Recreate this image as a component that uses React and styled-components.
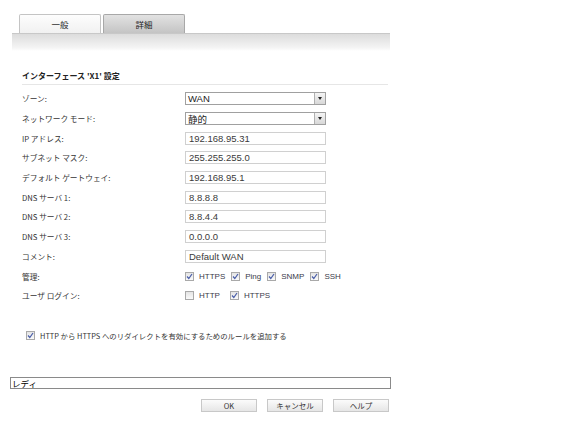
import React from "react";
import styled, { createGlobalStyle } from "styled-components";

const Global = createGlobalStyle`
  html, body { margin: 0; padding: 0; background: #fff; }
  body { font-family: "Liberation Sans", "Noto Sans CJK JP", sans-serif; color: #333; }
`;

const Page = styled.div`
  width: 576px;
  height: 439px;
  padding-top: 14px;
  box-sizing: border-box;
`;

const TabBar = styled.div`
  display: flex;
  gap: 2px;
  padding-left: 19px;
  height: 19px;
`;

const Tab = styled.div`
  width: 82px;
  height: 19px;
  box-sizing: border-box;
  border: 1px solid ${(p) => (p.$active ? "#c4c4c4" : "#a8a8a8")};
  border-bottom: none;
  border-radius: 2px 2px 0 0;
  background: ${(p) =>
    p.$active
      ? "linear-gradient(#fdfdfd, #f1f1f1)"
      : "linear-gradient(#e2e2e2, #c4c4c4)"};
  display: flex;
  align-items: center;
  justify-content: center;
  font-family: "Noto Sans CJK JP", sans-serif;
  font-size: 8.5px;
  color: #222;
`;

const Band = styled.div`
  margin-left: 12px;
  width: 378px;
  height: 17px;
  border-top: 1px solid #c8c8c8;
  background: linear-gradient(#dcdcdc, #f4f4f4 80%, #ffffff);
`;

const Section = styled.div`
  padding: 18px 0 0 22px;
  width: 366px;
`;

const Title = styled.div`
  font-family: "Noto Sans CJK JP", sans-serif;
  font-size: 8px;
  font-weight: bold;
  color: #222;
  height: 15px;
  line-height: 14px;
  border-bottom: 1px solid #e6e6e6;
`;

const Form = styled.div`
  display: grid;
  grid-template-columns: 163px 141px;
  grid-auto-rows: 19.7px;
  align-items: center;
  margin-top: 4px;
`;

const Label = styled.div`
  font-family: "Noto Sans CJK JP", sans-serif;
  font-size: 7.7px;
  color: #333;
  white-space: nowrap;
`;

const SelectBox = styled.div`
  height: 13px;
  box-sizing: border-box;
  border: 1px solid #a0a0a0;
  background: #fff;
  display: flex;
  align-items: center;
  justify-content: space-between;
  font-family: "Liberation Sans", "Noto Sans CJK JP", sans-serif;
  font-size: 9.5px;
  color: #222;
  padding-left: 2px;
`;

const Arrow = styled.div`
  width: 11px;
  height: 11px;
  box-sizing: border-box;
  border-left: 1px solid #b0b0b0;
  background: linear-gradient(#f4f4f4, #d8d8d8);
  display: flex;
  align-items: center;
  justify-content: center;
  &::after {
    content: "";
    border-left: 2.5px solid transparent;
    border-right: 2.5px solid transparent;
    border-top: 3px solid #222;
  }
`;

const Field = styled.div`
  height: 13px;
  box-sizing: border-box;
  border: 1px solid #d0d0d0;
  background: #fff;
  display: flex;
  align-items: center;
  padding-left: 3px;
  font-family: "Liberation Sans", sans-serif;
  font-size: 9.5px;
  color: #3a3a3a;
`;

const Checks = styled.div`
  display: flex;
  align-items: center;
  gap: ${(p) => p.$gap}px;
`;

const CheckItem = styled.label`
  display: flex;
  align-items: center;
  gap: 5px;
  font-family: "Liberation Sans", sans-serif;
  font-size: 8px;
  color: #3a3a4a;
`;

const Box = styled.span`
  width: 9px;
  height: 9px;
  box-sizing: border-box;
  border: 1px solid #a9a9a9;
  background: linear-gradient(#e4e4e4, #fafafa);
  display: inline-flex;
  align-items: center;
  justify-content: center;
  flex: none;
`;

const Check = ({ on }) => (
  <Box>
    {on && (
      <svg width="7" height="7" viewBox="0 0 7 7">
        <path d="M1 3.5 L2.8 5.5 L6 1" fill="none" stroke="#4a5ea8" strokeWidth="1.2" />
      </svg>
    )}
  </Box>
);

const Redirect = styled.div`
  margin: 24px 0 0 26px;
  display: flex;
  align-items: center;
  gap: 5px;
  font-family: "Noto Sans CJK JP", sans-serif;
  font-size: 7.4px;
  color: #333;
`;

const StatusBar = styled.div`
  margin: 36px 0 0 10px;
  width: 381px;
  height: 12px;
  box-sizing: border-box;
  border: 1px solid #8a8a8a;
  background: #fff;
  font-family: "Noto Sans CJK JP", sans-serif;
  font-size: 8.5px;
  line-height: 10px;
  padding-left: 1px;
  color: #000;
`;

const Buttons = styled.div`
  display: flex;
  gap: 10px;
  margin: 10px 0 0 201px;
`;

const Button = styled.div`
  width: 56px;
  height: 13px;
  box-sizing: border-box;
  border: 1px solid #c8c8c8;
  background: linear-gradient(#fbfbfb, #e6e6e6);
  display: flex;
  align-items: center;
  justify-content: center;
  font-family: "Noto Sans CJK JP", "Liberation Sans", sans-serif;
  font-size: 7.5px;
  color: #333;
`;

export default function App() {
  return (
    <>
      <Global />
      <Page>
        <TabBar>
          <Tab $active>一般</Tab>
          <Tab>詳細</Tab>
        </TabBar>
        <Band />
        <Section>
          <Title>インターフェース 'X1' 設定</Title>
          <Form>
            <Label>ゾーン:</Label>
            <SelectBox>WAN<Arrow /></SelectBox>
            <Label>ネットワーク モード:</Label>
            <SelectBox>静的<Arrow /></SelectBox>
            <Label>IP アドレス:</Label>
            <Field>192.168.95.31</Field>
            <Label>サブネット マスク:</Label>
            <Field>255.255.255.0</Field>
            <Label>デフォルト ゲートウェイ:</Label>
            <Field>192.168.95.1</Field>
            <Label>DNS サーバ 1:</Label>
            <Field>8.8.8.8</Field>
            <Label>DNS サーバ 2:</Label>
            <Field>8.8.4.4</Field>
            <Label>DNS サーバ 3:</Label>
            <Field>0.0.0.0</Field>
            <Label>コメント:</Label>
            <Field>Default WAN</Field>
            <Label>管理:</Label>
            <Checks $gap={6}>
              <CheckItem><Check on />HTTPS</CheckItem>
              <CheckItem><Check on />Ping</CheckItem>
              <CheckItem><Check on />SNMP</CheckItem>
              <CheckItem><Check on />SSH</CheckItem>
            </Checks>
            <Label>ユーザ ログイン:</Label>
            <Checks $gap={10}>
              <CheckItem><Check />HTTP</CheckItem>
              <CheckItem><Check on />HTTPS</CheckItem>
            </Checks>
          </Form>
        </Section>
        <Redirect>
          <Check on />
          HTTP から HTTPS へのリダイレクトを有効にするためのルールを追加する
        </Redirect>
        <StatusBar>レディ</StatusBar>
        <Buttons>
          <Button>OK</Button>
          <Button>キャンセル</Button>
          <Button>ヘルプ</Button>
        </Buttons>
      </Page>
    </>
  );
}
